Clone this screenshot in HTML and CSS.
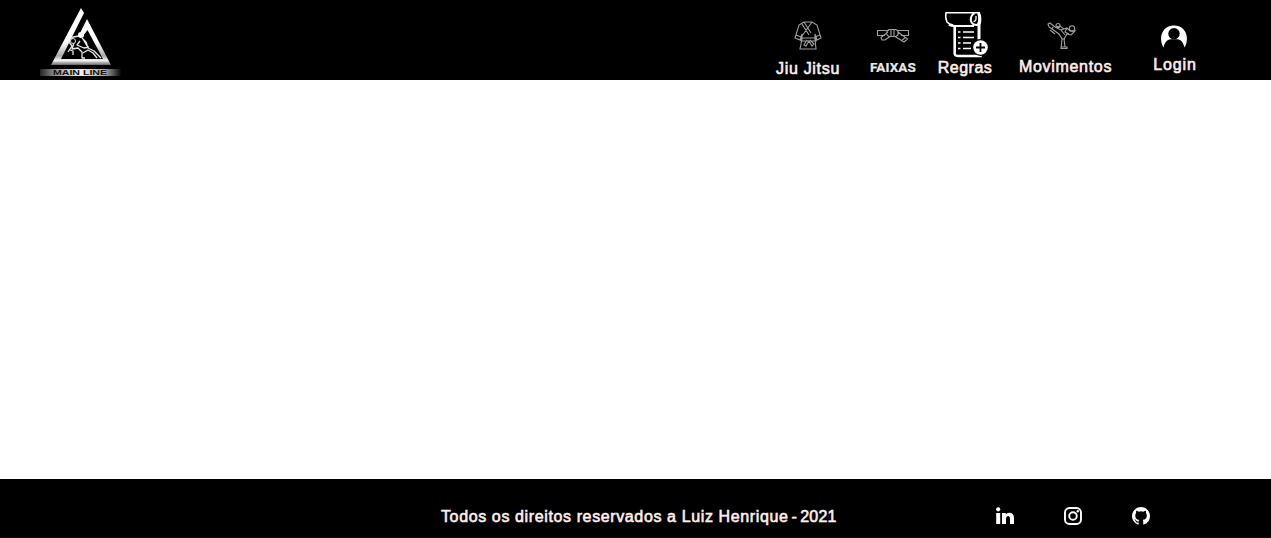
FILE: index.html
```html
<!DOCTYPE html>
<html lang="pt-BR">
<head>
<meta charset="utf-8">
<title>Main Line</title>
<link rel="stylesheet" href="styles.css">
</head>
<body>
<header class="header">
  <a class="brand">
    <svg width="84" height="72" viewBox="0 0 84 72">
      <defs>
        <linearGradient id="metal" x1="0" y1="0" x2="0" y2="1">
          <stop offset="0.6" stop-color="#fff"/><stop offset="0.84" stop-color="#aaa"/><stop offset="0.92" stop-color="#f4f4f4"/><stop offset="1" stop-color="#666"/>
        </linearGradient>
        <linearGradient id="plate" x1="0" y1="0" x2="1" y2="0">
          <stop offset="0" stop-color="#222"/><stop offset="0.2" stop-color="#999"/><stop offset="0.5" stop-color="#eee"/><stop offset="0.8" stop-color="#aaa"/><stop offset="1" stop-color="#050505"/>
        </linearGradient>
      </defs>
      <path fill="url(#metal)" d="M42 3 45 8 22 54H64L48.500 25 44 31 41 28 48 14 72 60H12Z"/>
      <g fill="none" stroke="#e8e8e8" stroke-width="1.300" stroke-linejoin="round">
        <path d="M40 31 34 32 30 37 33 41 29 47M35 38 33 44 39 43 43 47 43 53H46M43 33 47 37 49 43 55 46 62 53M41 36 38 40 45 43 50 42M44 48 49 45 54 48 58 53M44 34 48 41M31 45 34 46 34 50"/>
      </g>
      <circle cx="42" cy="30" r="3" fill="#fff"/><circle cx="34" cy="36" r="2.500" fill="#000" stroke="#ddd"/>
      <rect x="1" y="64" width="81" height="7" fill="url(#plate)"/>
      <text class="brand-name" x="14" y="70.200" textLength="54" lengthAdjust="spacingAndGlyphs">MAIN LINE</text>
    </svg>
  </a>
  <nav class="nav">
    <a class="item jiu">
      <svg width="28" height="30" viewBox="0 0 28 30" fill="none" stroke="#a0a0a0" stroke-width="1.1">
        <path d="M10 1 5 4 1 17 6 19 8 13V18L6 28H22L21 18V13L23 19 27 17 23 4 18 1ZM10 1 17 12M18 1 8 15M8 3 15 14M2 14 7 16M26 14 21 16M7 17H22V20H7ZM13 19 10 24 12 25 15 20 18 25 20 23 16 19"/>
      </svg>
      <span class="label">Jiu Jitsu</span>
    </a>
    <a class="item belts">
      <svg width="34" height="16" viewBox="0 0 34 16" fill="none" stroke="#a0a0a0" stroke-width="1.1">
        <path d="M13 2.500H1.500V7.500H9M21 2.500H32.500V7.500H25M13 1.500H20L22 3V7L20 8.500H13L11 7V3ZM15 1.500V8.500M18 1.500V8.500M12 4 5 9.500 6 12 9 12 14 8.500M19 8.500 28 14 31.500 11 22 4M26 12.500 29 9.500"/>
      </svg>
      <span class="label">FAIXAS</span>
    </a>
    <a class="item rules">
      <svg width="46" height="48" viewBox="0 0 46 48">
        <g fill="none" stroke="#fff">
          <path stroke-width="1.500" d="M37 2.700H3Q2 8 4 12Q6 14.500 10 15"/>
          <path stroke-width="2.200" d="M6 14.500Q8 16 12 16H31"/>
          <path stroke-width="2.600" d="M11.700 15V42Q11 46 15 46H37.500V43"/>
          <path stroke-width="2" d="M31.500 3Q27 6 28 11Q29 15 34 15Q37 13 36 4"/>
          <path stroke-width="3" d="M35.500 3Q38 8 36 15V34"/>
        </g>
        <path fill="none" stroke="#fff" stroke-width="1.300" d="M30.500 11Q32.500 12 33 9V6"/>
        <g stroke="#fff" stroke-width="1.700"><path d="M15 22H17.500M20 22H31M15 27.500H17.500M20 27.500H31M15 33H17.500M20 33H28M15 38.500H17.500M20 38.500H28"/></g>
        <circle cx="37.500" cy="37.500" r="8.500" fill="#000"/><circle cx="37.500" cy="37.500" r="7.300" fill="#fff"/>
        <path stroke="#000" stroke-width="1.800" d="M37.500 33V42M33 37.500H42"/>
      </svg>
      <span class="label">Regras</span>
    </a>
    <a class="item moves">
      <svg width="30" height="28" viewBox="0 0 30 28" fill="none" stroke="#a0a0a0" stroke-width="1.1">
        <circle cx="25" cy="6.500" r="2.700"/><circle cx="11" cy="3.500" r="2"/>
        <path d="M1 2 3 1 8 5 14 8 20 6 23 9 28 9 24 13 20 12 17 17 18 25H20V26.500H14L15 17 12 12 5 7 2 5ZM3 8 8 12M9 5 13 4 17 7M14 8 18 13M6 5 5 7M15 17H18M14 25H18M20 6 18 10 22 12"/>
      </svg>
      <span class="label">Movimentos</span>
    </a>
    <a class="item login">
      <svg width="28" height="23" viewBox="0 0 28 23">
        <path fill="#fff" d="M3.500 22.500C-2 13 2 .5 14 .5S30 13 24.500 22.500C23.500 18 21.500 15 18 14.200H10C6.500 15 4.500 18 3.500 22.500Z"/><circle cx="14" cy="8.800" r="5.700" fill="#000"/>
      </svg>
      <span class="label">Login</span>
    </a>
  </nav>
</header>
<main class="content"></main>
<footer class="footer">
  <p class="label copyright">Todos os direitos reservados a Luiz Henrique<span class="year"> - 2021</span></p>
  <div class="social">
    <svg width="18" height="18" viewBox="0 0 18 18" fill="#fff"><circle cx="2.200" cy="2.300" r="2.100"/><path d="M.2 6H4.200V17H.2ZM6 6H9.800V7.500Q10.800 5.700 13 5.700Q18 5.700 18 11V17H14V11.500Q14 9 12.200 9Q10 9 10 11.500V17H6Z"/></svg>
    <svg width="18" height="18" viewBox="0 0 18 18" fill="none" stroke="#fff" stroke-width="1.900"><rect x="1" y="1" width="16" height="16" rx="4.500"/><circle cx="9" cy="9" r="3.800"/><circle cx="13.800" cy="4.200" r="1.200" fill="#fff" stroke="none"/></svg>
    <svg width="18" height="18" viewBox="0 0 16 16" fill="#fff"><path d="M8 0C3.580 0 0 3.580 0 8c0 3.540 2.290 6.530 5.470 7.590.4.070.55-.17.550-.38 0-.19-.01-.82-.01-1.490-2.010.37-2.530-.49-2.690-.94-.09-.23-.48-.94-.82-1.130-.28-.15-.68-.52-.01-.53.630-.01 1.080.58 1.230.82.720 1.210 1.870.87 2.330.66.070-.52.280-.87.510-1.070-1.780-.2-3.640-.89-3.640-3.950 0-.87.310-1.590.82-2.150-.08-.2-.36-1.020.08-2.120 0 0 .67-.21 2.200.82a7.500 7.500 0 0 1 4 0c1.530-1.040 2.200-.82 2.200-.82.440 1.100.16 1.920.08 2.120.51.560.82 1.270.82 2.150 0 3.070-1.870 3.750-3.650 3.950.29.250.54.730.54 1.480 0 1.070-.01 1.930-.01 2.200 0 .21.150.46.550.38A8 8 0 0 0 16 8c0-4.420-3.580-8-8-8Z"/></svg>
  </div>
</footer>
</body>
</html>
```
FILE: styles.css
```css
* { box-sizing: border-box; }
body {
  margin: 0;
  height: 538px;
  display: flex;
  flex-direction: column;
  overflow: hidden;
  background: #fff;
  font-family: "Liberation Sans", Arial, sans-serif;
}
svg { display: block; flex: none; }
.header {
  height: 80px;
  display: flex;
  justify-content: space-between;
  background: #000;
}
.brand { padding: 5px 0 0 39px; }
.brand-name { font-size: 7px; font-weight: bold; fill: #111; }
.nav { display: flex; padding-right: 59px; }
.item {
  display: flex;
  flex-direction: column;
  align-items: center;
  height: 80px;
}
.label {
  color: #ffeeec;
  font-size: 16px;
  line-height: 18px;
  letter-spacing: .7px;
  white-space: nowrap;
  -webkit-text-stroke: .6px #ffeeec;
}
.item .label { margin-top: auto; }
.jiu { width: 82px; padding: 21px 0 2px; }
.belts { width: 88px; padding: 28px 0 4px; }
.belts .label {
  color: #e8e8e8;
  font-family: Roboto, "Liberation Sans", sans-serif;
  font-size: 13.500px;
  font-weight: bold;
  letter-spacing: .1px;
  -webkit-text-stroke: .2px #e8e8e8;
}
.rules { width: 56px; padding: 10px 0 3px; }
.rules svg { margin-left: 2px; }
.rules .label { letter-spacing: .5px; }
.moves { width: 145px; padding: 22px 0 4px; }
.moves svg { margin-right: 8px; }
.login { width: 74px; padding: 25px 0 6px; }
.login svg { margin-right: 2px; }
.login .label { letter-spacing: .9px; }
.content { flex: 1; }
.footer {
  height: 59px;
  display: grid;
  grid-template-columns: 555px 1fr;
  padding: 28px 0 0 441px;
  background: #000;
  border-bottom: 1px solid #220b0b;
}
.copyright { margin: 1px 0 0; letter-spacing: .62px; }
.year { letter-spacing: .2px; word-spacing: -1.500px; }
.social { display: flex; gap: 50px; }
```
